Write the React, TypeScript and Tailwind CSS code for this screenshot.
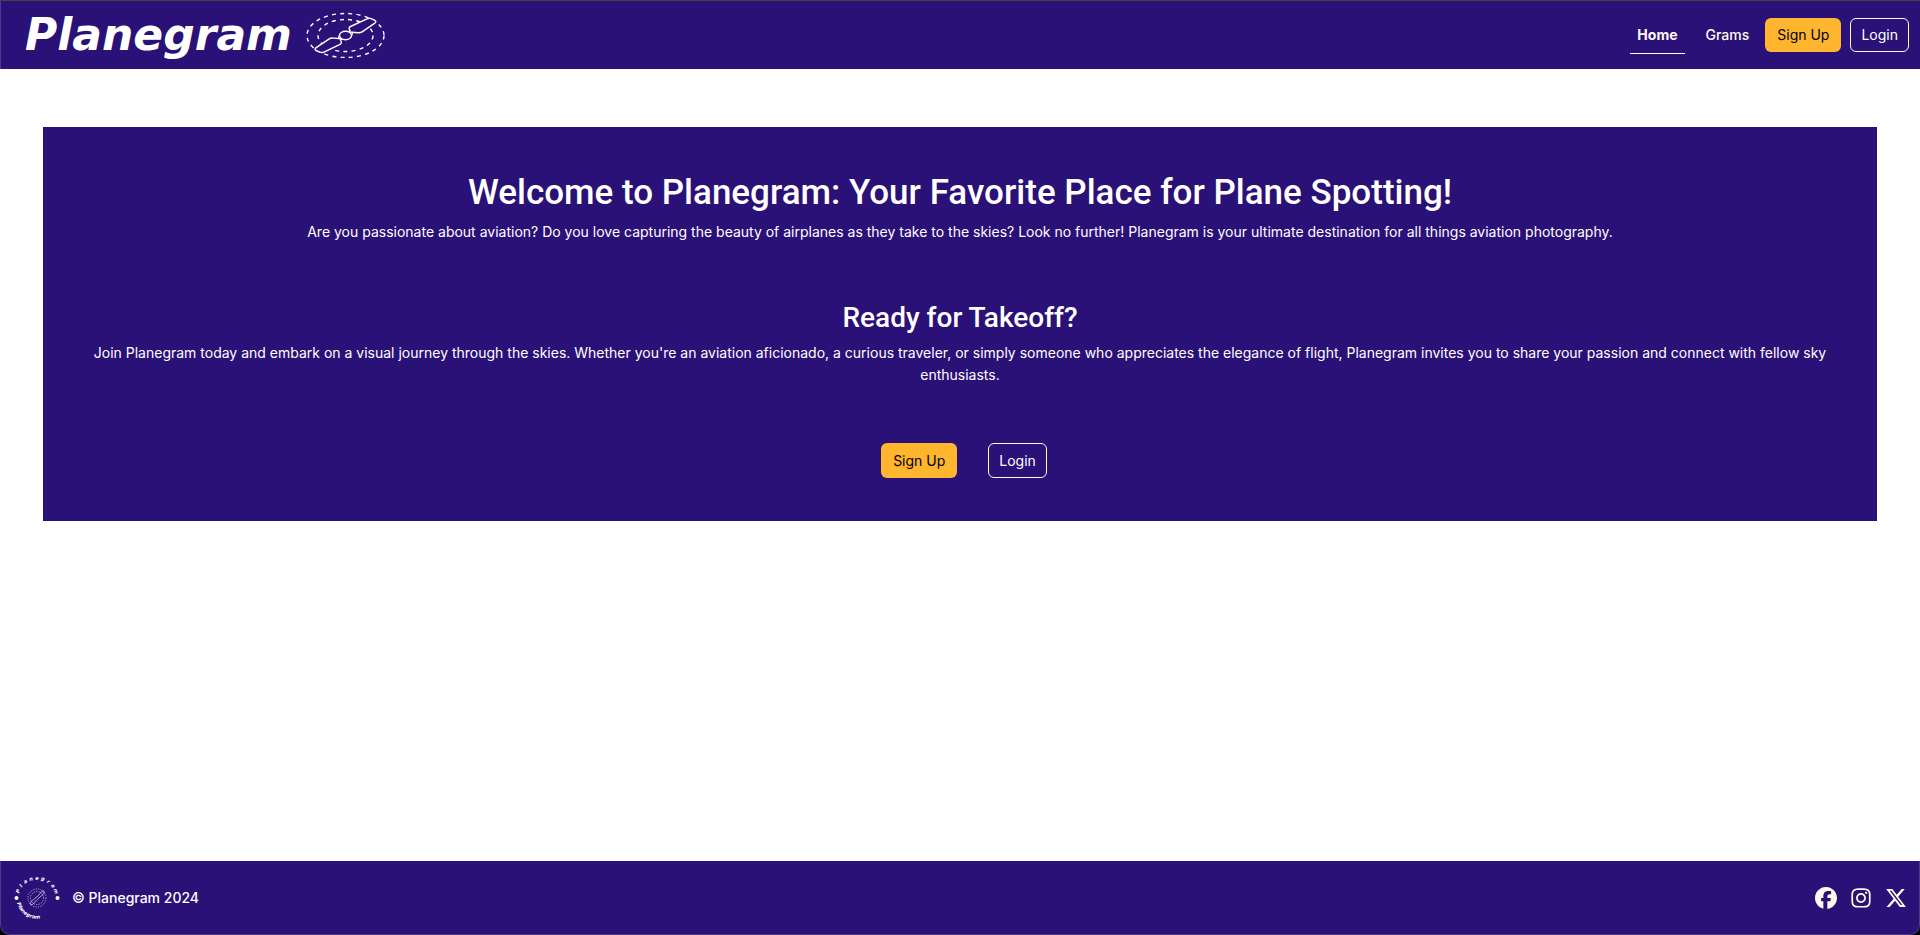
import React from "react";
import { FaFacebook, FaInstagram, FaXTwitter } from "react-icons/fa6";

const signUp = "flex items-center rounded-md bg-[#ffb52e] px-3 text-black";
const login = "flex items-center rounded-md border border-[#fffaf0] px-[10px] text-white";

function Propeller() {
  return (
    <svg viewBox="0 0 80 46" className="h-[46px] w-[80px]" fill="none" stroke="white" aria-hidden="true">
      <ellipse cx="39.5" cy="23.5" rx="38.5" ry="22" strokeWidth="1.4" strokeDasharray="4 4.2" />
      <ellipse cx="39.5" cy="23.5" rx="27.5" ry="16" strokeWidth="1.4" strokeDasharray="4 4.2" />
      <path
        d="M43 20 L44 18.5 Q42 15.5 44.5 14.5 L61 6.8 Q63 5.9 65 6.7 L68.5 8.2 Q71 9.5 68.8 11.2 L56.5 19.6 Q54.5 21 52 20.8 L46 20.3 Z"
        fill="#2a1177"
        strokeWidth="1.4"
      />
      <path
        d="M36 27 L34.5 28 Q36.5 31.2 34 32.3 L18.5 39.9 Q16.5 41 14 40.2 L10 38.5 Q8 37.3 10.2 35.6 L22.5 27.3 Q24.5 25.9 27 26.1 L33 26.5 Z"
        fill="#2a1177"
        strokeWidth="1.4"
      />
      <ellipse cx="39.5" cy="23.5" rx="6" ry="4.2" fill="#2a1177" strokeWidth="1.4" />
      <path d="M33.5 22.5 L32 27 M45.5 24.5 L47 20" strokeWidth="1" />
    </svg>
  );
}

function Badge() {
  return (
    <svg viewBox="0 0 48 48" className="size-12" aria-hidden="true">
      <defs>
        <path id="badge-bottom" d="M4 29 A20.5 20.5 0 0 0 26 44.5" />
      </defs>
      <g fill="none" stroke="white" strokeWidth="0.6">
        <circle cx="24" cy="24" r="9" strokeDasharray="1.2 1.2" />
        <circle cx="24" cy="24" r="6.5" strokeDasharray="1.2 1.2" />
        <path d="M24.5 22.5 L29 17.2 Q31 16 31.3 18 L30.5 20 L25 24.7 L19.5 30.5 Q17.5 31.6 17 29.8 L18 27.8 L23 23.3 Z" />
      </g>
      <circle cx="3.5" cy="24" r="2" fill="white" />
      <circle cx="44.5" cy="24" r="2" fill="white" />
      <g fill="white" className="font-['DejaVu_Sans'] font-bold italic">
        {["P", "l", "a", "n", "e", "g", "r", "a", "m"].map((c, i) => (
          <text key={i} x="24" y="5.5" fontSize="5" textAnchor="middle" transform={`rotate(${(i - 4) * 17.5} 24 24)`}>
            {c}
          </text>
        ))}
        <text fontSize="5">
          <textPath href="#badge-bottom">Planegram</textPath>
        </text>
      </g>
    </svg>
  );
}

export default function App() {
  return (
    <div className="flex min-h-screen flex-col bg-white font-['Inter',sans-serif] text-[14px] leading-[22px] text-white">
      <header className="flex h-[69px] items-center justify-between border-t border-l border-t-[#444444] border-l-[#4b3a8a] bg-[#2a1177] pr-[11px] pl-6">
        <a href="#home" className="flex items-center gap-[14px]">
          <span className="font-['DejaVu_Sans'] text-[44px] leading-none font-bold italic">Planegram</span>
          <Propeller />
        </a>
        <nav className="flex items-center gap-[9px]">
          <a
            href="#home"
            aria-current="page"
            className="border-b border-white px-[7px] py-[7px] font-bold text-[#fffaf0]"
          >
            Home
          </a>
          <a href="#grams" className="pr-[7px] pl-3 font-medium text-[#fffaf0]">
            Grams
          </a>
          <a href="#signup" className={`${signUp} h-[34px]`}>
            Sign Up
          </a>
          <a href="#login" className={`${login} h-[34px]`}>
            Login
          </a>
        </nav>
      </header>
      <main className="flex-1 px-[43px] py-[58px]">
        <section className="flex flex-col items-center bg-[#2a1177] px-12 pt-11 pb-[43px] text-center">
          <h1 className="font-['Roboto',sans-serif] text-[35px] leading-[44px] font-medium">
            Welcome to Planegram: Your Favorite Place for Plane Spotting!
          </h1>
          <p className="mt-[6px]">
            Are you passionate about aviation? Do you love capturing the beauty of airplanes as they take to the skies?
            Look no further! Planegram is your ultimate destination for all things aviation photography.
          </p>
          <h2 className="mt-[57px] font-['Roboto',sans-serif] text-[28px] leading-[36px] font-medium">
            Ready for Takeoff?
          </h2>
          <p className="mt-[6px]">
            Join Planegram today and embark on a visual journey through the skies. Whether you're an aviation aficionado,
            a curious traveler, or simply someone who appreciates the elegance of flight, Planegram invites you to share
            your passion and connect with fellow sky enthusiasts.
          </p>
          <div className="mt-[57px] flex gap-[31px] pl-2">
            <a href="#signup" className={`${signUp} h-[35px]`}>
              Sign Up
            </a>
            <a href="#login" className={`${login} h-[35px]`}>
              Login
            </a>
          </div>
        </section>
      </main>
      <div className="bg-black">
        <footer className="flex h-[74px] items-center justify-between rounded-b-[10px] border border-[#4b3a8a] border-t-[#2a1177] bg-[#2a1177] px-3">
          <div className="flex items-center gap-[11px] font-medium">
            <Badge />
            <span>© Planegram 2024</span>
          </div>
          <div className="flex items-center gap-[13px] text-[22px] text-[#fffaf0]">
            <a href="#facebook" aria-label="Facebook">
              <FaFacebook />
            </a>
            <a href="#instagram" aria-label="Instagram">
              <FaInstagram />
            </a>
            <a href="#x" aria-label="X">
              <FaXTwitter />
            </a>
          </div>
        </footer>
      </div>
    </div>
  );
}
